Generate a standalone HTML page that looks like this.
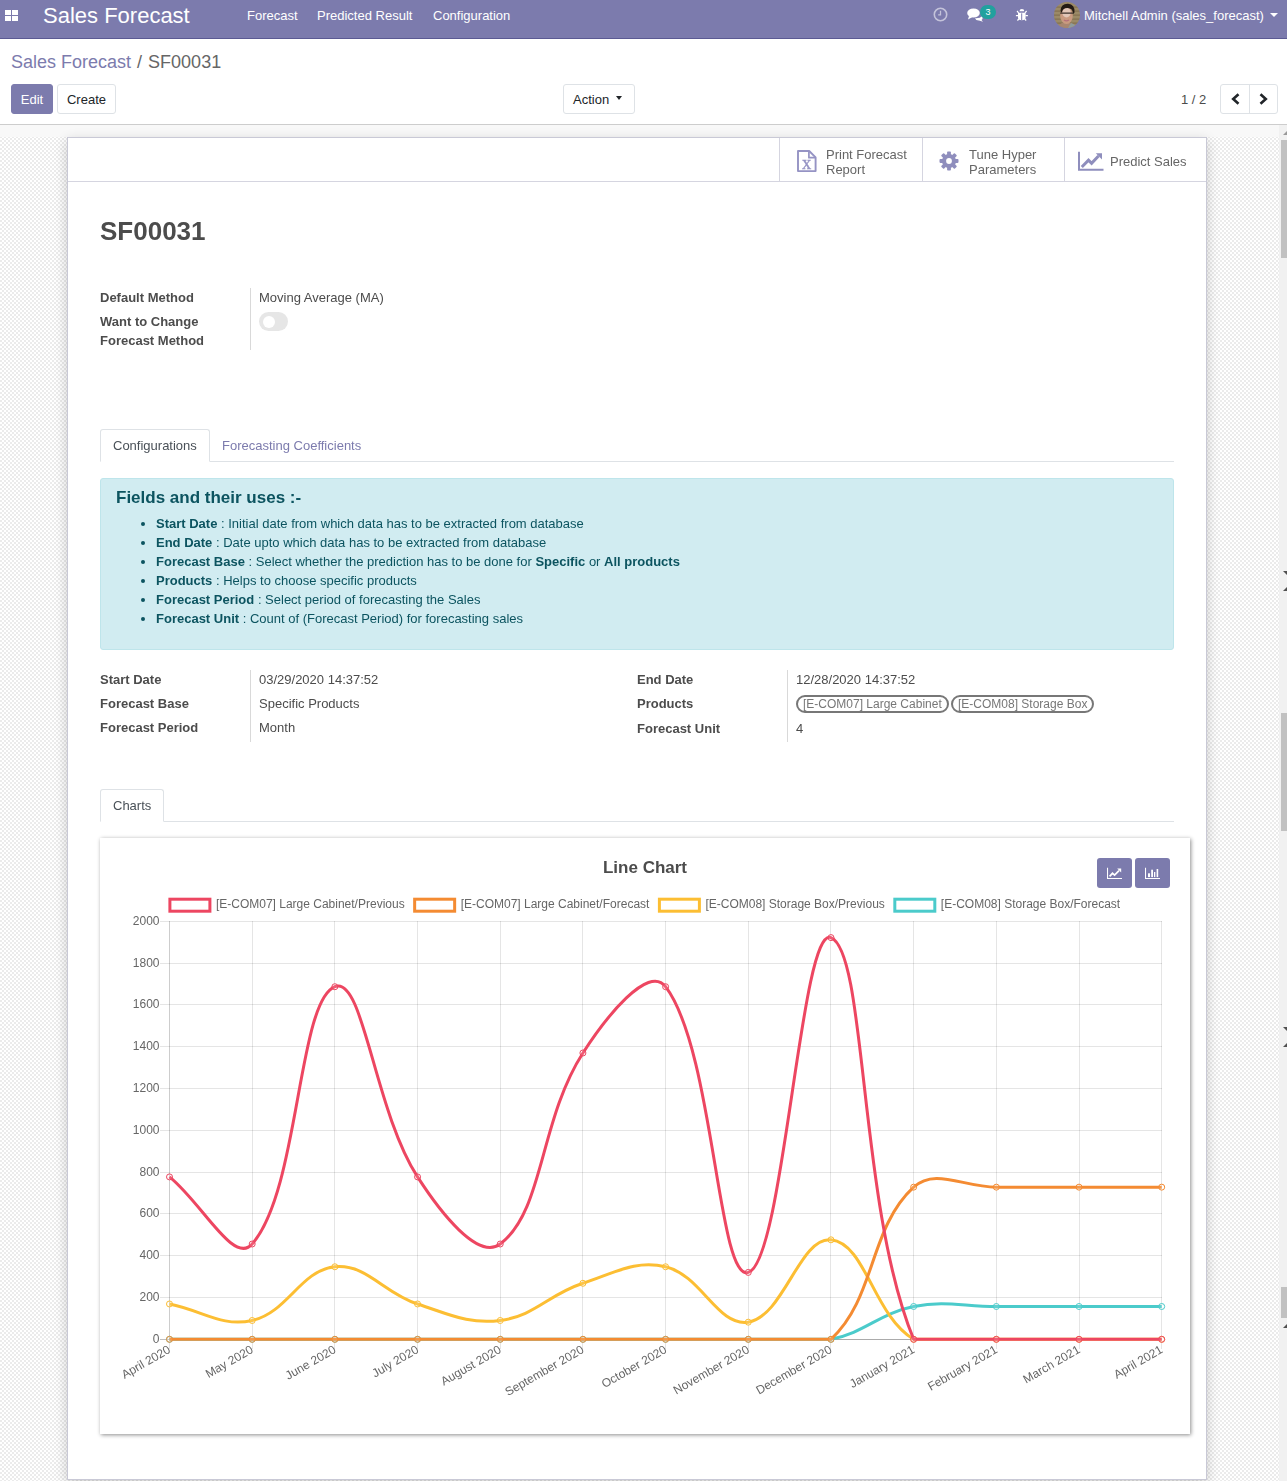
<!DOCTYPE html>
<html><head><meta charset="utf-8">
<style>
*{box-sizing:border-box;margin:0;padding:0}
html,body{width:1287px;height:1481px;overflow:hidden;background:#fff;font-family:"Liberation Sans",sans-serif;font-size:13px;color:#4c4c4c}
.abs{position:absolute}
#nav{position:absolute;left:0;top:0;width:1287px;height:39px;background:#7C7BAD;border-bottom:1px solid #5b5a93;color:#fff}
#nav .brand{position:absolute;left:43px;top:2px;font-size:22px;line-height:28px;color:#fff}
#nav .mi{position:absolute;top:8px;font-size:13px;line-height:15px;color:#fff}
#cp{position:absolute;left:0;top:39px;width:1287px;height:86px;background:#fff;border-bottom:1px solid #cdcdcd}
.bc{position:absolute;left:11px;top:12px;font-size:18px;line-height:22px;color:#666;white-space:nowrap}
.bc a{color:#7C7BAD;text-decoration:none}
.btn{position:absolute;height:30px;border-radius:3px;font-size:13px;line-height:30px;text-align:center;border:1px solid #dee2e6;background:#fff;color:#212529}
.btn.pri{background:#7C7BAD;border-color:#7C7BAD;color:#fff}
#bg{position:absolute;left:0;top:125px;width:1279px;height:1356px;background-color:#f8f8f8}
#checker{position:absolute;left:0;top:12px;width:1279px;height:1344px;
 background-image:linear-gradient(45deg,#ebebeb 25%,transparent 25%,transparent 75%,#ebebeb 75%),linear-gradient(45deg,#ebebeb 25%,transparent 25%,transparent 75%,#ebebeb 75%);
 background-color:#fff;background-size:4px 4px;background-position:0 1px,2px 3px}
#sb{position:absolute;left:1279px;top:125px;width:8px;height:1356px;background:#f1f1f1}
.thumb{position:absolute;left:2px;width:6px;background:#c1c1c1}
.arr{position:absolute;left:4px;width:0;height:0;border-left:4px solid transparent;border-right:4px solid transparent}
.arr.up{border-bottom:4px solid #505050}
.arr.dn{border-top:4px solid #505050}
#sheet{position:absolute;left:67px;top:137px;width:1140px;height:1343px;background:#fff;border:1px solid #c9c9d6;box-shadow:0 4px 12px rgba(0,0,0,0.2)}
#bbox{position:absolute;left:0;top:0;width:1138px;height:44px;border-bottom:1px solid #d5d5e0}
.sbtn{position:absolute;top:0;height:43px;border-left:1px solid #d5d5e0;color:#666;font-size:13px;line-height:15px}
.lbl{position:absolute;font-weight:bold;font-size:13px;line-height:19px;color:#4c4c4c;white-space:nowrap}
.val{position:absolute;font-size:13px;line-height:19px;color:#4c4c4c;white-space:nowrap}
.vsep{position:absolute;width:1px;background:#d9d9d9}
.tabs{position:absolute;left:100px;width:1074px;border-bottom:1px solid #dee2e6}
.tab{position:absolute;bottom:-1px;height:33px;border:1px solid #dee2e6;border-bottom-color:#fff;border-radius:3px 3px 0 0;background:#fff;padding:0 12px;line-height:32px;color:#495057;font-size:13px}
.tab2{position:absolute;bottom:-1px;height:33px;padding:0 12px;line-height:34px;color:#7C7BAD;font-size:13px}
#alert{position:absolute;left:100px;top:478px;width:1074px;height:172px;background:#d1ecf1;border:1px solid #bee5eb;border-radius:3px;color:#0c5460}
#alert h4{position:absolute;left:15px;top:9px;font-size:17px;line-height:20px;font-weight:bold}
#alert ul{position:absolute;left:55px;top:35px;list-style:disc;font-size:13px;line-height:19px}
#alert li b{font-weight:bold}
.tag{position:absolute;height:18px;border:2px solid #777;border-radius:9px;font-size:12px;line-height:14px;color:#777;padding:0 5px;white-space:nowrap}
#card{position:absolute;left:100px;top:838px;width:1090px;height:596px;background:#fff;box-shadow:1px 1px 4px rgba(0,0,0,0.45)}
#card .ttl{position:absolute;left:0;width:1090px;top:20px;text-align:center;font-weight:bold;font-size:17px;line-height:20px;color:#4c4c4c}
.cbtn{position:absolute;top:20px;width:35px;height:30px;border-radius:3px;background:#7C7BAD}
svg.chart{position:absolute;left:0;top:0}
svg.chart text{font-family:"Liberation Sans",sans-serif;font-size:12px;fill:#666}
</style></head>
<body>
<div id="nav">
 <svg class="abs" style="left:5px;top:10px" width="13" height="11" viewBox="0 0 13 11"><rect x="0" y="0" width="6" height="5" fill="#fff"/><rect x="7" y="0" width="6" height="5" fill="#fff"/><rect x="0" y="6" width="6" height="5" fill="#fff"/><rect x="7" y="6" width="6" height="5" fill="#fff"/></svg>
 <div class="brand">Sales Forecast</div>
 <div class="mi" style="left:247px">Forecast</div>
 <div class="mi" style="left:317px">Predicted Result</div>
 <div class="mi" style="left:433px">Configuration</div>
 <!-- clock -->
 <svg class="abs" style="left:933px;top:7px" width="15" height="15" viewBox="0 0 15 15"><circle cx="7.5" cy="7.5" r="6.2" fill="none" stroke="rgba(255,255,255,0.55)" stroke-width="1.6"/><path d="M7.5 3.8V7.8H5.2" fill="none" stroke="rgba(255,255,255,0.55)" stroke-width="1.3"/></svg>
 <!-- chat -->
 <svg class="abs" style="left:967px;top:8px" width="17" height="14" viewBox="0 0 17 14"><ellipse cx="6.5" cy="5" rx="6.3" ry="4.6" fill="#fff"/><path d="M2 8 L1 11.5 L5.5 9z" fill="#fff"/><path d="M8 10.2 Q13 10.5 15.5 8 Q16 11 14.5 12 L16 13.8 L12 12.6 Q9 12.8 8 10.2z" fill="#fff"/></svg>
 <div class="abs" style="left:980px;top:5px;width:16px;height:14px;border-radius:7px;background:#21A19E;color:#fff;font-size:9px;line-height:14px;text-align:center">3</div>
 <!-- bug -->
 <svg class="abs" style="left:1015px;top:8px" width="14" height="14" viewBox="0 0 14 14"><path d="M4.5 3.3 A2.4 2.2 0 0 1 9.3 3.3Z" fill="#fff"/><path d="M3 4.8H10.6V9.6Q10.6 12.3 6.8 12.3Q3 12.3 3 9.6Z" fill="#fff"/><path d="M2 3L3.6 4.9M11.6 3L10 4.9M0.9 7.6H3.2M10.4 7.6H12.9M2.4 12.5L3.9 11M11.2 12.5L9.7 11" stroke="#fff" stroke-width="1.2" fill="none"/><rect x="6.2" y="5.3" width="1" height="7" fill="#7C7BAD"/></svg>
 <!-- avatar -->
 <svg class="abs" style="left:1054px;top:2px" width="26" height="26" viewBox="0 0 26 26">
  <defs><clipPath id="avc"><circle cx="13" cy="13" r="13"/></clipPath></defs>
  <g clip-path="url(#avc)">
   <rect width="26" height="26" fill="#9c8a66"/>
   <g fill="#6f5c3e" opacity="0.55"><rect y="4.5" width="26" height="1.2"/><rect y="8.5" width="26" height="1.2"/><rect y="12.5" width="26" height="1.2"/><rect y="16.5" width="26" height="1.2"/><rect y="20.5" width="26" height="1.2"/></g>
   <path d="M4 26 Q6 20 12 20 Q18 20 21 26Z" fill="#a88670"/>
   <path d="M14 26 L17 21 Q21 22 23 26Z" fill="#8f9c9c"/>
   <ellipse cx="12.5" cy="13.5" rx="6.3" ry="8.6" fill="#c99a80"/>
   <ellipse cx="12.5" cy="10.5" rx="4.2" ry="5" fill="#e2c6b8"/>
   <path d="M6.5 9 Q7 1.5 14 1.8 Q21 2.2 20.5 10.5 L19.2 12 Q19 6.2 13.5 6 Q8.5 6 7.8 11Z" fill="#231a14"/>
   <path d="M6.2 11.2 H19.5" stroke="#3b302b" stroke-width="1.3"/>
   <path d="M10 18 Q12.5 19.6 15 18" stroke="#b4707a" stroke-width="1.2" fill="none"/>
  </g>
 </svg>
 <div class="mi" style="left:1084px">Mitchell Admin (sales_forecast)</div>
 <div class="abs" style="left:1270px;top:13px;width:0;height:0;border-left:4px solid transparent;border-right:4px solid transparent;border-top:4px solid #fff"></div>
</div>

<div id="cp">
 <div class="bc"><a>Sales Forecast</a> <span style="padding:0 1px">/</span> SF00031</div>
 <div class="btn pri" style="left:11px;top:45px;width:42px">Edit</div>
 <div class="btn" style="left:57px;top:45px;width:59px">Create</div>
 <div class="btn" style="left:563px;top:45px;width:72px;text-align:left;padding-left:9px">Action</div>
 <div class="abs" style="left:616px;top:57px;width:0;height:0;border-left:3.5px solid transparent;border-right:3.5px solid transparent;border-top:4px solid #212529"></div>
 <div class="abs" style="left:1181px;top:53px;font-size:13px;line-height:15px;color:#4c4c4c">1 / 2</div>
 <div class="btn" style="left:1220px;top:45px;width:58px"></div>
 <div class="abs" style="left:1249px;top:45px;width:1px;height:30px;background:#dee2e6"></div>
 <svg class="abs" style="left:1231px;top:54px" width="9" height="12" viewBox="0 0 9 12"><path d="M7.5 1.2L2.2 6L7.5 10.8" fill="none" stroke="#212529" stroke-width="2.6"/></svg>
 <svg class="abs" style="left:1259px;top:54px" width="9" height="12" viewBox="0 0 9 12"><path d="M1.5 1.2L6.8 6L1.5 10.8" fill="none" stroke="#212529" stroke-width="2.6"/></svg>
</div>

<div id="content" style="position:absolute;left:0;top:0;width:1287px;height:1481px;will-change:transform">
<div id="bg"><div id="checker"></div></div>
<div id="sb">
 <div class="arr up" style="top:6px;border-bottom-color:#999"></div>
 <div class="thumb" style="top:15px;height:118px"></div>
 <div class="arr dn" style="top:446px"></div>
 <div class="arr up" style="top:462px"></div>
 <div class="thumb" style="top:588px;height:118px"></div>
 <div class="arr dn" style="top:902px"></div>
 <div class="arr up" style="top:918px"></div>
 <div class="thumb" style="top:1162px;height:31px"></div>
 <div class="arr up" style="top:1199px"></div>
</div>

<div id="sheet">
 <div id="bbox">
  <div class="sbtn" style="left:711px;width:143px">
   <svg class="abs" style="left:17px;top:12px" width="20" height="24" viewBox="0 0 20 24"><path d="M1 1H12.2L18.6 7.4V21.1H1Z" fill="none" stroke="#9593c4" stroke-width="1.9" stroke-linejoin="round"/><path d="M11.9 1.2V7.7H18.4" fill="none" stroke="#9593c4" stroke-width="1.7" stroke-linejoin="round"/><text x="9.7" y="19.3" text-anchor="middle" font-family="Liberation Serif" font-size="18.5" fill="#9593c4" stroke="#9593c4" stroke-width="0.35">x</text></svg>
   <div class="abs" style="left:46px;top:9px">Print Forecast<br>Report</div>
  </div>
  <div class="sbtn" style="left:854px;width:143px">
   <svg class="abs" style="left:16px;top:13px" width="20" height="20" viewBox="-10 -10 20 20"><g fill="#8f8ebd"><circle r="7"/><rect x="-1.9" y="-9.5" width="3.8" height="4.5" rx="0.8" transform="rotate(0)"/><rect x="-1.9" y="-9.5" width="3.8" height="4.5" rx="0.8" transform="rotate(45)"/><rect x="-1.9" y="-9.5" width="3.8" height="4.5" rx="0.8" transform="rotate(90)"/><rect x="-1.9" y="-9.5" width="3.8" height="4.5" rx="0.8" transform="rotate(135)"/><rect x="-1.9" y="-9.5" width="3.8" height="4.5" rx="0.8" transform="rotate(180)"/><rect x="-1.9" y="-9.5" width="3.8" height="4.5" rx="0.8" transform="rotate(225)"/><rect x="-1.9" y="-9.5" width="3.8" height="4.5" rx="0.8" transform="rotate(270)"/><rect x="-1.9" y="-9.5" width="3.8" height="4.5" rx="0.8" transform="rotate(315)"/></g><circle r="2.9" fill="#fff"/></svg>
   <div class="abs" style="left:46px;top:9px">Tune Hyper<br>Parameters</div>
  </div>
  <div class="sbtn" style="left:996px;width:142px">
   <svg class="abs" style="left:13px;top:13px" width="26" height="20" viewBox="0 0 26 20"><path d="M1 0.8V18.8H25.5" fill="none" stroke="#8f8ebd" stroke-width="2"/><path d="M3.8 16L10.5 9.1L13.6 12.3L20.5 5" fill="none" stroke="#8f8ebd" stroke-width="3"/><path d="M17.8 2.2H24V8.6Z" fill="#8f8ebd"/></svg>
   <div class="abs" style="left:45px;top:16px">Predict Sales</div>
  </div>
 </div>
</div>

<!-- form content in page coords -->
<div class="abs" style="left:100px;top:216px;font-size:26px;line-height:30px;font-weight:bold;color:#4c4c4c">SF00031</div>

<div class="lbl" style="left:100px;top:288px">Default Method</div>
<div class="lbl" style="left:100px;top:312px;white-space:normal;width:120px">Want to Change Forecast Method</div>
<div class="vsep" style="left:250px;top:288px;height:62px"></div>
<div class="val" style="left:259px;top:288px">Moving Average (MA)</div>
<div class="abs" style="left:259px;top:312px;width:29px;height:19px;border-radius:10px;background:#e6e6e6"></div>
<div class="abs" style="left:263px;top:316px;width:12px;height:12px;border-radius:6px;background:#fff"></div>

<div class="tabs" style="top:429px;height:33px">
 <div class="tab" style="left:0;width:110px">Configurations</div>
 <div class="tab2" style="left:110px">Forecasting Coefficients</div>
</div>

<div id="alert">
 <h4>Fields and their uses :-</h4>
 <ul>
  <li><b>Start Date</b> : Initial date from which data has to be extracted from database</li>
  <li><b>End Date</b> : Date upto which data has to be extracted from database</li>
  <li><b>Forecast Base</b> : Select whether the prediction has to be done for <b>Specific</b> or <b>All products</b></li>
  <li><b>Products</b> : Helps to choose specific products</li>
  <li><b>Forecast Period</b> : Select period of forecasting the Sales</li>
  <li><b>Forecast Unit</b> : Count of (Forecast Period) for forecasting sales</li>
 </ul>
</div>

<div class="lbl" style="left:100px;top:670px">Start Date</div>
<div class="lbl" style="left:100px;top:694px">Forecast Base</div>
<div class="lbl" style="left:100px;top:718px">Forecast Period</div>
<div class="vsep" style="left:250px;top:670px;height:72px"></div>
<div class="val" style="left:259px;top:670px">03/29/2020 14:37:52</div>
<div class="val" style="left:259px;top:694px">Specific Products</div>
<div class="val" style="left:259px;top:718px">Month</div>

<div class="lbl" style="left:637px;top:670px">End Date</div>
<div class="lbl" style="left:637px;top:694px">Products</div>
<div class="lbl" style="left:637px;top:719px">Forecast Unit</div>
<div class="vsep" style="left:787px;top:670px;height:72px"></div>
<div class="val" style="left:796px;top:670px">12/28/2020 14:37:52</div>
<div class="tag" style="left:796px;top:695px">[E-COM07] Large Cabinet</div>
<div class="tag" style="left:951px;top:695px">[E-COM08] Storage Box</div>
<div class="val" style="left:796px;top:719px">4</div>

<div class="tabs" style="top:789px;height:33px">
 <div class="tab" style="left:0;width:64px">Charts</div>
</div>

<div id="card">
 <div class="ttl">Line Chart</div>
 <div class="cbtn" style="left:997px">
  <svg class="abs" style="left:10px;top:8px" width="16" height="15" viewBox="0 0 16 15"><path d="M0.5 1.8V12.5H15" fill="none" stroke="#fff" stroke-width="1.1"/><path d="M2.6 10.4L5.5 7.3L7.6 9.1L12 4.7" fill="none" stroke="#fff" stroke-width="1.7"/><path d="M10.2 2.6H14.2V6.6Z" fill="#fff"/></svg>
 </div>
 <div class="cbtn" style="left:1035px">
  <svg class="abs" style="left:10px;top:8px" width="16" height="15" viewBox="0 0 16 15"><path d="M0.5 1.8V12.5H15" fill="none" stroke="#fff" stroke-width="1.1"/><rect x="3" y="7.3" width="2" height="3.8" fill="#fff"/><rect x="6.2" y="3.7" width="1.8" height="7.4" fill="#fff"/><rect x="9" y="6" width="1.3" height="5.1" fill="#fff"/><rect x="11.6" y="3" width="1.6" height="8.1" fill="#fff"/></svg>
 </div>
 <svg class="chart" width="1090" height="596" viewBox="100 838 1090 596">
<g shape-rendering="crispEdges"><line x1="159.5" y1="1339.5" x2="1162.2" y2="1339.5" stroke="rgba(0,0,0,0.25)"/><line x1="159.5" y1="1297.5" x2="1162.2" y2="1297.5" stroke="rgba(0,0,0,0.1)"/><line x1="159.5" y1="1255.5" x2="1162.2" y2="1255.5" stroke="rgba(0,0,0,0.1)"/><line x1="159.5" y1="1213.5" x2="1162.2" y2="1213.5" stroke="rgba(0,0,0,0.1)"/><line x1="159.5" y1="1172.5" x2="1162.2" y2="1172.5" stroke="rgba(0,0,0,0.1)"/><line x1="159.5" y1="1130.5" x2="1162.2" y2="1130.5" stroke="rgba(0,0,0,0.1)"/><line x1="159.5" y1="1088.5" x2="1162.2" y2="1088.5" stroke="rgba(0,0,0,0.1)"/><line x1="159.5" y1="1046.5" x2="1162.2" y2="1046.5" stroke="rgba(0,0,0,0.1)"/><line x1="159.5" y1="1004.5" x2="1162.2" y2="1004.5" stroke="rgba(0,0,0,0.1)"/><line x1="159.5" y1="963.5" x2="1162.2" y2="963.5" stroke="rgba(0,0,0,0.1)"/><line x1="159.5" y1="921.5" x2="1162.2" y2="921.5" stroke="rgba(0,0,0,0.1)"/><line x1="169.5" y1="921.3" x2="169.5" y2="1349.3" stroke="rgba(0,0,0,0.1)"/><line x1="252.5" y1="921.3" x2="252.5" y2="1349.3" stroke="rgba(0,0,0,0.1)"/><line x1="334.5" y1="921.3" x2="334.5" y2="1349.3" stroke="rgba(0,0,0,0.1)"/><line x1="417.5" y1="921.3" x2="417.5" y2="1349.3" stroke="rgba(0,0,0,0.1)"/><line x1="500.5" y1="921.3" x2="500.5" y2="1349.3" stroke="rgba(0,0,0,0.1)"/><line x1="582.5" y1="921.3" x2="582.5" y2="1349.3" stroke="rgba(0,0,0,0.1)"/><line x1="665.5" y1="921.3" x2="665.5" y2="1349.3" stroke="rgba(0,0,0,0.1)"/><line x1="748.5" y1="921.3" x2="748.5" y2="1349.3" stroke="rgba(0,0,0,0.1)"/><line x1="830.5" y1="921.3" x2="830.5" y2="1349.3" stroke="rgba(0,0,0,0.1)"/><line x1="913.5" y1="921.3" x2="913.5" y2="1349.3" stroke="rgba(0,0,0,0.1)"/><line x1="996.5" y1="921.3" x2="996.5" y2="1349.3" stroke="rgba(0,0,0,0.1)"/><line x1="1079.5" y1="921.3" x2="1079.5" y2="1349.3" stroke="rgba(0,0,0,0.1)"/><line x1="1161.5" y1="921.3" x2="1161.5" y2="1349.3" stroke="rgba(0,0,0,0.1)"/><line x1="169.5" y1="921.3" x2="169.5" y2="1339.3" stroke="rgba(0,0,0,0.1)"/><line x1="169.5" y1="1339.5" x2="1162.2" y2="1339.5" stroke="rgba(0,0,0,0.1)"/></g>
<g class="yl" text-anchor="end"><text x="159.5" y="1342.7">0</text><text x="159.5" y="1300.9">200</text><text x="159.5" y="1259.1">400</text><text x="159.5" y="1217.3">600</text><text x="159.5" y="1175.5">800</text><text x="159.5" y="1133.7">1000</text><text x="159.5" y="1091.9">1200</text><text x="159.5" y="1050.1">1400</text><text x="159.5" y="1008.3">1600</text><text x="159.5" y="966.5">1800</text><text x="159.5" y="924.7">2000</text></g>
<g class="xl" text-anchor="end"><text transform="translate(169.40 1348.50) rotate(-30.0)" x="0" y="4">April 2020</text><text transform="translate(252.08 1348.50) rotate(-30.0)" x="0" y="4">May 2020</text><text transform="translate(334.77 1348.50) rotate(-30.0)" x="0" y="4">June 2020</text><text transform="translate(417.45 1348.50) rotate(-30.0)" x="0" y="4">July 2020</text><text transform="translate(500.13 1348.50) rotate(-30.0)" x="0" y="4">August 2020</text><text transform="translate(582.82 1348.50) rotate(-30.0)" x="0" y="4">September 2020</text><text transform="translate(665.50 1348.50) rotate(-30.0)" x="0" y="4">October 2020</text><text transform="translate(748.18 1348.50) rotate(-30.0)" x="0" y="4">November 2020</text><text transform="translate(830.87 1348.50) rotate(-30.0)" x="0" y="4">December 2020</text><text transform="translate(913.55 1348.50) rotate(-30.0)" x="0" y="4">January 2021</text><text transform="translate(996.23 1348.50) rotate(-30.0)" x="0" y="4">February 2021</text><text transform="translate(1078.92 1348.50) rotate(-30.0)" x="0" y="4">March 2021</text><text transform="translate(1161.60 1348.50) rotate(-30.0)" x="0" y="4">April 2021</text></g>
<path d="M169.50 1339.30 C202.57 1339.30 219.11 1339.30 252.18 1339.30 C285.26 1339.30 301.79 1339.30 334.87 1339.30 C367.94 1339.30 384.48 1339.30 417.55 1339.30 C450.62 1339.30 467.16 1339.30 500.23 1339.30 C533.31 1339.30 549.84 1339.30 582.92 1339.30 C615.99 1339.30 632.53 1339.30 665.60 1339.30 C698.67 1339.30 715.21 1339.30 748.28 1339.30 C781.36 1339.30 799.10 1339.30 830.97 1339.30 C865.25 1332.50 879.37 1313.29 913.65 1306.49 C945.51 1300.16 963.26 1306.49 996.33 1306.49 C1029.41 1306.49 1045.94 1306.49 1079.02 1306.49 C1112.09 1306.49 1128.63 1306.49 1161.70 1306.49" fill="none" stroke="#4BCBCB" stroke-width="3" stroke-linejoin="round"/>
<circle cx="169.50" cy="1339.30" r="3" fill="rgba(255,255,255,0.12)" stroke="#4BCBCB" stroke-width="1"/>
<circle cx="252.18" cy="1339.30" r="3" fill="rgba(255,255,255,0.12)" stroke="#4BCBCB" stroke-width="1"/>
<circle cx="334.87" cy="1339.30" r="3" fill="rgba(255,255,255,0.12)" stroke="#4BCBCB" stroke-width="1"/>
<circle cx="417.55" cy="1339.30" r="3" fill="rgba(255,255,255,0.12)" stroke="#4BCBCB" stroke-width="1"/>
<circle cx="500.23" cy="1339.30" r="3" fill="rgba(255,255,255,0.12)" stroke="#4BCBCB" stroke-width="1"/>
<circle cx="582.92" cy="1339.30" r="3" fill="rgba(255,255,255,0.12)" stroke="#4BCBCB" stroke-width="1"/>
<circle cx="665.60" cy="1339.30" r="3" fill="rgba(255,255,255,0.12)" stroke="#4BCBCB" stroke-width="1"/>
<circle cx="748.28" cy="1339.30" r="3" fill="rgba(255,255,255,0.12)" stroke="#4BCBCB" stroke-width="1"/>
<circle cx="830.97" cy="1339.30" r="3" fill="rgba(255,255,255,0.12)" stroke="#4BCBCB" stroke-width="1"/>
<circle cx="913.65" cy="1306.49" r="3" fill="rgba(255,255,255,0.12)" stroke="#4BCBCB" stroke-width="1"/>
<circle cx="996.33" cy="1306.49" r="3" fill="rgba(255,255,255,0.12)" stroke="#4BCBCB" stroke-width="1"/>
<circle cx="1079.02" cy="1306.49" r="3" fill="rgba(255,255,255,0.12)" stroke="#4BCBCB" stroke-width="1"/>
<circle cx="1161.70" cy="1306.49" r="3" fill="rgba(255,255,255,0.12)" stroke="#4BCBCB" stroke-width="1"/>
<path d="M169.50 1303.98 C202.57 1310.58 221.69 1327.35 252.18 1320.49 C287.84 1312.47 300.41 1270.22 334.87 1266.78 C366.55 1263.61 383.28 1292.85 417.55 1303.98 C449.42 1314.33 468.36 1324.48 500.23 1320.49 C534.51 1316.20 548.64 1294.42 582.92 1283.29 C614.79 1272.94 635.26 1259.65 665.60 1266.78 C701.41 1275.19 717.84 1327.13 748.28 1322.16 C783.98 1316.34 799.60 1236.56 830.97 1239.82 C865.74 1243.42 873.30 1315.02 913.65 1339.30 C939.44 1339.30 963.26 1339.30 996.33 1339.30 C1029.41 1339.30 1045.94 1339.30 1079.02 1339.30 C1112.09 1339.30 1128.63 1339.30 1161.70 1339.30" fill="none" stroke="#FCBE33" stroke-width="3" stroke-linejoin="round"/>
<circle cx="169.50" cy="1303.98" r="3" fill="rgba(255,255,255,0.12)" stroke="#FCBE33" stroke-width="1"/>
<circle cx="252.18" cy="1320.49" r="3" fill="rgba(255,255,255,0.12)" stroke="#FCBE33" stroke-width="1"/>
<circle cx="334.87" cy="1266.78" r="3" fill="rgba(255,255,255,0.12)" stroke="#FCBE33" stroke-width="1"/>
<circle cx="417.55" cy="1303.98" r="3" fill="rgba(255,255,255,0.12)" stroke="#FCBE33" stroke-width="1"/>
<circle cx="500.23" cy="1320.49" r="3" fill="rgba(255,255,255,0.12)" stroke="#FCBE33" stroke-width="1"/>
<circle cx="582.92" cy="1283.29" r="3" fill="rgba(255,255,255,0.12)" stroke="#FCBE33" stroke-width="1"/>
<circle cx="665.60" cy="1266.78" r="3" fill="rgba(255,255,255,0.12)" stroke="#FCBE33" stroke-width="1"/>
<circle cx="748.28" cy="1322.16" r="3" fill="rgba(255,255,255,0.12)" stroke="#FCBE33" stroke-width="1"/>
<circle cx="830.97" cy="1239.82" r="3" fill="rgba(255,255,255,0.12)" stroke="#FCBE33" stroke-width="1"/>
<circle cx="913.65" cy="1339.30" r="3" fill="rgba(255,255,255,0.12)" stroke="#FCBE33" stroke-width="1"/>
<circle cx="996.33" cy="1339.30" r="3" fill="rgba(255,255,255,0.12)" stroke="#FCBE33" stroke-width="1"/>
<circle cx="1079.02" cy="1339.30" r="3" fill="rgba(255,255,255,0.12)" stroke="#FCBE33" stroke-width="1"/>
<circle cx="1161.70" cy="1339.30" r="3" fill="rgba(255,255,255,0.12)" stroke="#FCBE33" stroke-width="1"/>
<path d="M169.50 1339.30 C202.57 1339.30 219.11 1339.30 252.18 1339.30 C285.26 1339.30 301.79 1339.30 334.87 1339.30 C367.94 1339.30 384.48 1339.30 417.55 1339.30 C450.62 1339.30 467.16 1339.30 500.23 1339.30 C533.31 1339.30 549.84 1339.30 582.92 1339.30 C615.99 1339.30 632.53 1339.30 665.60 1339.30 C698.67 1339.30 715.21 1339.30 748.28 1339.30 C781.36 1339.30 809.59 1339.30 830.97 1339.30 C875.74 1298.11 868.88 1228.34 913.65 1187.15 C935.03 1167.48 963.26 1187.15 996.33 1187.15 C1029.41 1187.15 1045.94 1187.15 1079.02 1187.15 C1112.09 1187.15 1128.63 1187.15 1161.70 1187.15" fill="none" stroke="#F48B32" stroke-width="3" stroke-linejoin="round"/>
<circle cx="169.50" cy="1339.30" r="3" fill="rgba(255,255,255,0.12)" stroke="#F48B32" stroke-width="1"/>
<circle cx="252.18" cy="1339.30" r="3" fill="rgba(255,255,255,0.12)" stroke="#F48B32" stroke-width="1"/>
<circle cx="334.87" cy="1339.30" r="3" fill="rgba(255,255,255,0.12)" stroke="#F48B32" stroke-width="1"/>
<circle cx="417.55" cy="1339.30" r="3" fill="rgba(255,255,255,0.12)" stroke="#F48B32" stroke-width="1"/>
<circle cx="500.23" cy="1339.30" r="3" fill="rgba(255,255,255,0.12)" stroke="#F48B32" stroke-width="1"/>
<circle cx="582.92" cy="1339.30" r="3" fill="rgba(255,255,255,0.12)" stroke="#F48B32" stroke-width="1"/>
<circle cx="665.60" cy="1339.30" r="3" fill="rgba(255,255,255,0.12)" stroke="#F48B32" stroke-width="1"/>
<circle cx="748.28" cy="1339.30" r="3" fill="rgba(255,255,255,0.12)" stroke="#F48B32" stroke-width="1"/>
<circle cx="830.97" cy="1339.30" r="3" fill="rgba(255,255,255,0.12)" stroke="#F48B32" stroke-width="1"/>
<circle cx="913.65" cy="1187.15" r="3" fill="rgba(255,255,255,0.12)" stroke="#F48B32" stroke-width="1"/>
<circle cx="996.33" cy="1187.15" r="3" fill="rgba(255,255,255,0.12)" stroke="#F48B32" stroke-width="1"/>
<circle cx="1079.02" cy="1187.15" r="3" fill="rgba(255,255,255,0.12)" stroke="#F48B32" stroke-width="1"/>
<circle cx="1161.70" cy="1187.15" r="3" fill="rgba(255,255,255,0.12)" stroke="#F48B32" stroke-width="1"/>
<path d="M169.50 1176.91 C202.57 1203.74 233.49 1265.50 252.18 1244.00 C299.63 1189.42 297.44 1001.90 334.87 986.72 C363.59 975.06 373.84 1108.91 417.55 1176.91 C439.99 1211.82 477.85 1260.77 500.23 1244.00 C543.99 1211.20 539.08 1121.17 582.92 1052.97 C605.23 1018.26 648.23 963.66 665.60 986.72 C714.37 1051.44 717.65 1281.52 748.28 1272.42 C783.80 1261.87 800.75 925.38 830.97 937.60 C866.90 952.13 858.60 1205.58 913.65 1339.30 C924.75 1339.30 963.26 1339.30 996.33 1339.30 C1029.41 1339.30 1045.94 1339.30 1079.02 1339.30 C1112.09 1339.30 1128.63 1339.30 1161.70 1339.30" fill="none" stroke="#ED4661" stroke-width="3" stroke-linejoin="round"/>
<circle cx="169.50" cy="1176.91" r="3" fill="rgba(255,255,255,0.12)" stroke="#ED4661" stroke-width="1"/>
<circle cx="252.18" cy="1244.00" r="3" fill="rgba(255,255,255,0.12)" stroke="#ED4661" stroke-width="1"/>
<circle cx="334.87" cy="986.72" r="3" fill="rgba(255,255,255,0.12)" stroke="#ED4661" stroke-width="1"/>
<circle cx="417.55" cy="1176.91" r="3" fill="rgba(255,255,255,0.12)" stroke="#ED4661" stroke-width="1"/>
<circle cx="500.23" cy="1244.00" r="3" fill="rgba(255,255,255,0.12)" stroke="#ED4661" stroke-width="1"/>
<circle cx="582.92" cy="1052.97" r="3" fill="rgba(255,255,255,0.12)" stroke="#ED4661" stroke-width="1"/>
<circle cx="665.60" cy="986.72" r="3" fill="rgba(255,255,255,0.12)" stroke="#ED4661" stroke-width="1"/>
<circle cx="748.28" cy="1272.42" r="3" fill="rgba(255,255,255,0.12)" stroke="#ED4661" stroke-width="1"/>
<circle cx="830.97" cy="937.60" r="3" fill="rgba(255,255,255,0.12)" stroke="#ED4661" stroke-width="1"/>
<circle cx="913.65" cy="1339.30" r="3" fill="rgba(255,255,255,0.12)" stroke="#ED4661" stroke-width="1"/>
<circle cx="996.33" cy="1339.30" r="3" fill="rgba(255,255,255,0.12)" stroke="#ED4661" stroke-width="1"/>
<circle cx="1079.02" cy="1339.30" r="3" fill="rgba(255,255,255,0.12)" stroke="#ED4661" stroke-width="1"/>
<circle cx="1161.70" cy="1339.30" r="3" fill="rgba(255,255,255,0.12)" stroke="#ED4661" stroke-width="1"/>
<g class="lg"><rect x="169.90" y="899.20" width="40" height="12" fill="#fff" stroke="#ED4661" stroke-width="3"/><text x="215.90" y="908.00">[E-COM07] Large Cabinet/Previous</text><rect x="414.65" y="899.20" width="40" height="12" fill="#fff" stroke="#F48B32" stroke-width="3"/><text x="460.65" y="908.00">[E-COM07] Large Cabinet/Forecast</text><rect x="659.40" y="899.20" width="40" height="12" fill="#fff" stroke="#FCBE33" stroke-width="3"/><text x="705.40" y="908.00">[E-COM08] Storage Box/Previous</text><rect x="894.81" y="899.20" width="40" height="12" fill="#fff" stroke="#4BCBCB" stroke-width="3"/><text x="940.81" y="908.00">[E-COM08] Storage Box/Forecast</text></g>
</svg>
</div>
</div>
</body></html>
